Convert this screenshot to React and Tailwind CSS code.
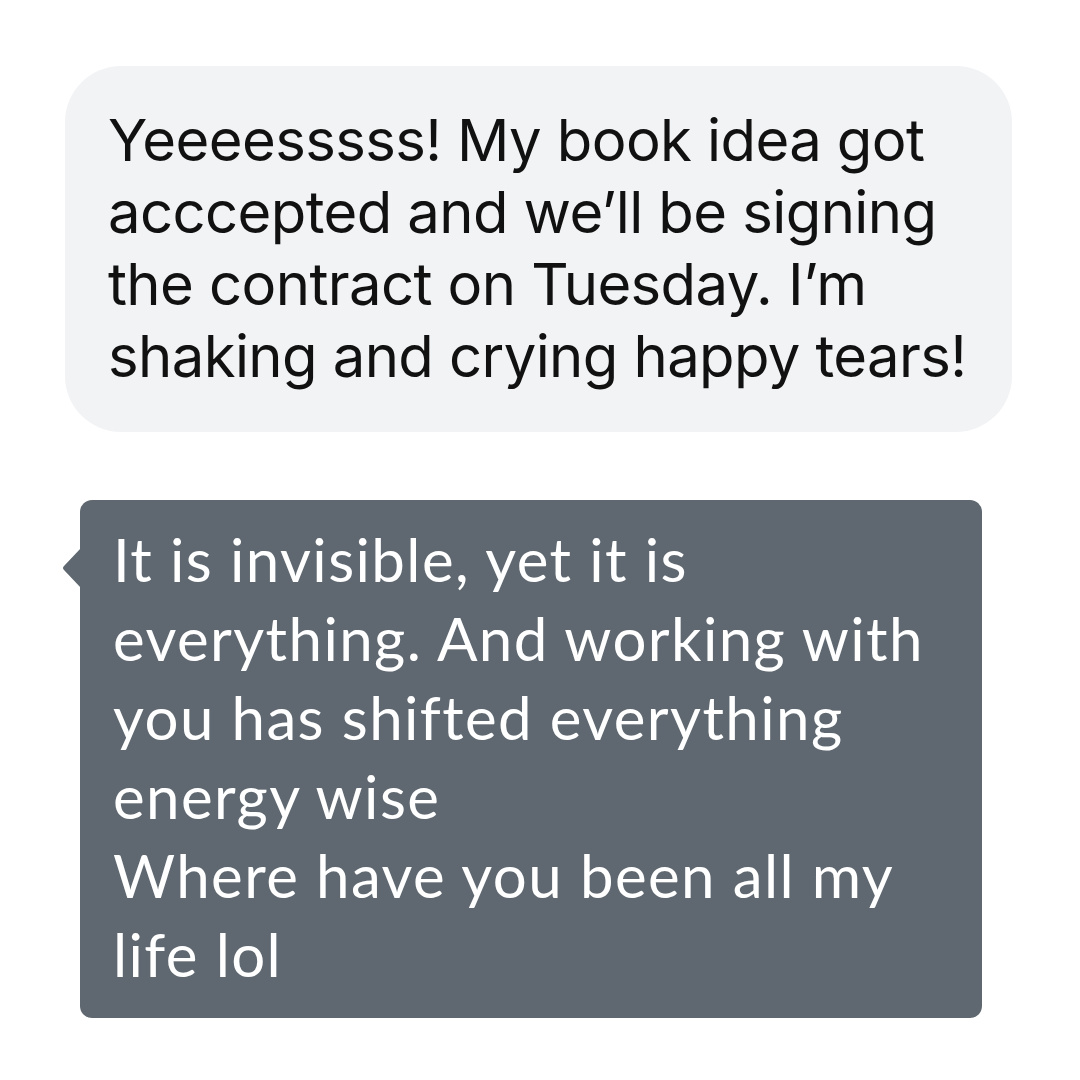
const replyLines = [
  'It is invisible, yet it is',
  'everything. And working with',
  'you has shifted everything',
  'energy wise',
  'Where have you been all my',
  'life lol',
]

export default function App() {
  return (
    <div className="w-[1080px] h-[1080px] bg-white overflow-hidden">
      {/* incoming bubble */}
      <div className="ml-[65px] mt-[66px] w-[947px] rounded-[56px] bg-[#f2f3f5] pl-[43px] pr-[30px] pt-[38px] pb-[40px]">
        <p className="text-[58px] leading-[72px] text-[#111111] tracking-[-0.6px] font-['Inter',sans-serif]">
          Yeeeesssss! My book idea got acccepted and we’ll be signing the contract on Tuesday. I’m shaking and crying happy tears!
        </p>
      </div>

      {/* reply card */}
      <div className="relative ml-[80px] mt-[68px] w-[902px] rounded-[12px] bg-[#5f6870] pl-[33px] pr-[20px] pt-[20px] pb-[24px]">
        <svg className="absolute left-[-18px] top-[48px]" width="19" height="40" viewBox="0 0 19 40">
          <path d="M19 0 L2 18 Q0 20 2 22 L19 40 Z" fill="#5f6870" />
        </svg>
        <div className="text-[60px] leading-[79px] text-white tracking-[1.4px] font-['Lato',sans-serif]">
          {replyLines.map((line, i) => (
            <p key={i} className="whitespace-nowrap">{line}</p>
          ))}
        </div>
      </div>
    </div>
  )
}
